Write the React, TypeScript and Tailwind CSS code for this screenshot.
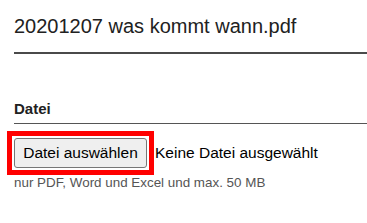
export default function App() {
  return (
    <div className="h-[223px] w-[367px] overflow-hidden bg-white pl-[14px] font-['Liberation_Sans',Arial,sans-serif] text-[#212121]">
      <h1 className="border-b-2 border-[#4a4a4a] pt-[15px] pb-[14px] text-[20px] leading-[23px] font-normal">
        20201207 was kommt wann.pdf
      </h1>

      <div className="mt-[46px]">
        <label className="block border-b border-[#555] pb-[5px] text-[15px] leading-[18px] font-bold">
          Datei
        </label>

        <div className="mt-[14px] flex items-center">
          {/* red highlight box round the file button */}
          <span className="-m-[7px] inline-flex border-[5px] border-[#ff0000] p-[2px]">
            <button
              type="button"
              className="h-[30px] w-[133px] rounded-[3px] border border-[#767676] bg-[#efefef] text-center text-[15.5px] leading-[18px] text-black"
            >
              Datei auswählen
            </button>
          </span>
          <span className="ml-[8px] text-[15.5px] leading-[18px] text-black">
            Keine Datei ausgewählt
          </span>
        </div>

        <p className="mt-[7px] text-[13.4px] leading-[16px] text-[#555]">
          nur PDF, Word und Excel und max. 50 MB
        </p>
      </div>
    </div>
  );
}
